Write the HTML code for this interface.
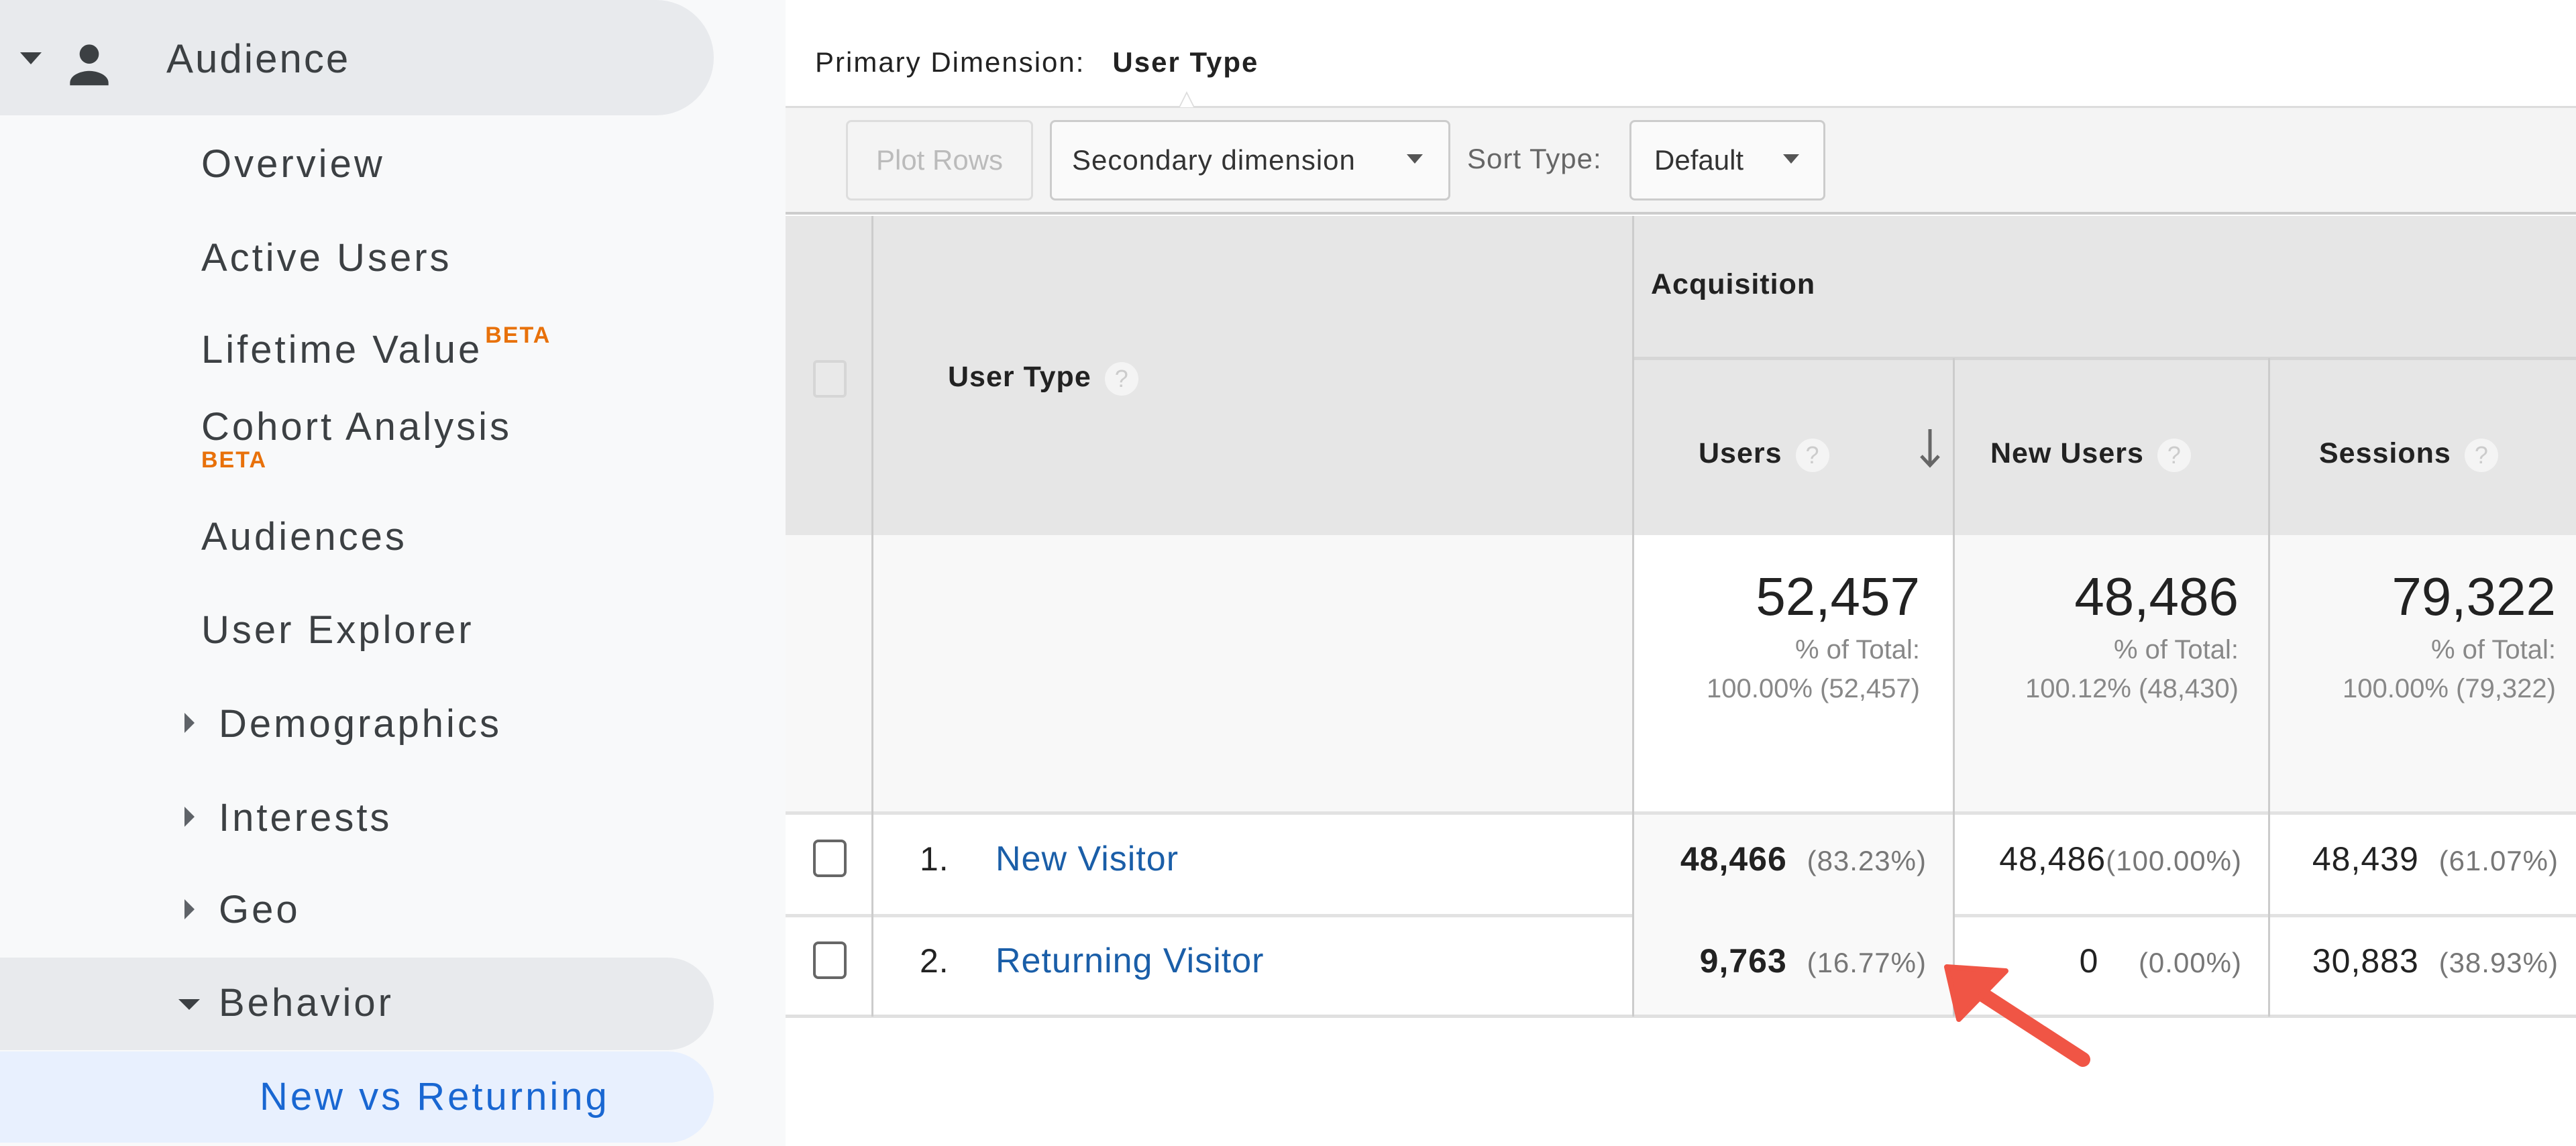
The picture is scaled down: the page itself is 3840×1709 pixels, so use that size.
<!DOCTYPE html>
<html><head><meta charset="utf-8"><style>
*{margin:0;padding:0;box-sizing:border-box}
body{width:3840px;height:1709px;position:relative;overflow:hidden;background:#fff;font-family:"Liberation Sans",sans-serif}
.a{position:absolute;white-space:nowrap}
.s{font-size:58px;color:#3c4043;line-height:80px;height:80px;letter-spacing:4px}
.tri{position:absolute;width:0;height:0}
.q{display:inline-block;width:50px;height:50px;border-radius:50%;background:#f4f4f4;color:#ccc;font-size:36px;line-height:50px;text-align:center;font-weight:normal;vertical-align:middle;margin-left:20px;letter-spacing:0}
.h{font-size:43px;font-weight:bold;color:#222;line-height:60px;letter-spacing:1px}
.vl{position:absolute;width:3px;background:#ccc}
.n{font-size:50px;color:#222;line-height:60px;text-align:right;letter-spacing:1px}
.p{color:#777;font-size:42px;font-weight:normal}
.cb{position:absolute;width:50px;height:56px;border:4px solid #666;border-radius:8px;background:#fff}
</style></head><body>
<div class="a" style="left:0;top:0;width:1171px;height:1709px;background:#f8f9fa"></div>
<div class="a" style="left:0;top:0;width:1064px;height:172px;background:#e8eaed;border-radius:0 86px 86px 0"></div>
<div class="a" style="left:0;top:1428px;width:1064px;height:138px;background:#e8eaed;border-radius:0 69px 69px 0"></div>
<div class="a" style="left:0;top:1568px;width:1064px;height:136px;background:#e8f0fe;border-radius:0 68px 68px 0"></div>
<div class="tri" style="left:30px;top:78px;border-left:16px solid transparent;border-right:16px solid transparent;border-top:18px solid #3c4043"></div>
<svg class="a" style="left:90px;top:52px" width="86" height="86" viewBox="0 0 24 24"><circle cx="12" cy="8" r="4" fill="#3c4043"/><path d="M4 20c0-3.5 5-5 8-5s8 1.5 8 5v1H4z" fill="#3c4043"/></svg>
<div class="a s" style="left:248px;top:48px;font-size:60px;letter-spacing:3px">Audience</div>
<div class="a s" style="left:300px;top:205px">Overview</div>
<div class="a s" style="left:300px;top:345px">Active Users</div>
<div class="a s" style="left:300px;top:482px">Lifetime Value<span style="position:relative;top:-30px;font-size:34px;color:#e8710a;font-weight:bold;margin-left:4px;letter-spacing:2px">BETA</span></div>
<div class="a s" style="left:300px;top:597px">Cohort Analysis</div>
<div class="a" style="left:300px;top:667px;font-size:34px;color:#e8710a;font-weight:bold;letter-spacing:2px">BETA</div>
<div class="a s" style="left:300px;top:761px">Audiences</div>
<div class="a s" style="left:300px;top:900px">User Explorer</div>
<div class="tri" style="left:275px;top:1063px;border-top:15px solid transparent;border-bottom:15px solid transparent;border-left:15px solid #5f6368"></div>
<div class="a s" style="left:326px;top:1040px">Demographics</div>
<div class="tri" style="left:275px;top:1203px;border-top:15px solid transparent;border-bottom:15px solid transparent;border-left:15px solid #5f6368"></div>
<div class="a s" style="left:326px;top:1180px">Interests</div>
<div class="tri" style="left:275px;top:1341px;border-top:15px solid transparent;border-bottom:15px solid transparent;border-left:15px solid #5f6368"></div>
<div class="a s" style="left:326px;top:1317px">Geo</div>
<div class="tri" style="left:266px;top:1490px;border-left:16px solid transparent;border-right:16px solid transparent;border-top:16px solid #3c4043"></div>
<div class="a s" style="left:326px;top:1456px">Behavior</div>
<div class="a s" style="left:387px;top:1596px;color:#1967d2">New vs Returning</div>
<div class="a" style="left:1215px;top:68px;font-size:42px;color:#222;line-height:50px;letter-spacing:2px">Primary Dimension:&nbsp;&nbsp; <b>User Type</b></div>
<div class="a" style="left:1171px;top:158px;width:2669px;height:162px;background:#f4f4f4;border-top:3px solid #ddd;border-bottom:4px solid #ccc"></div>
<div class="a" style="left:1757px;top:136px;width:0;height:0;border-left:12px solid transparent;border-right:12px solid transparent;border-bottom:24px solid #ddd"></div>
<div class="a" style="left:1759px;top:140px;width:0;height:0;border-left:10px solid transparent;border-right:10px solid transparent;border-bottom:20px solid #fff"></div>
<div class="a" style="left:1261px;top:179px;width:279px;height:120px;border:3px solid #ddd;border-radius:8px;background:#f4f4f4;color:#bbb;font-size:42px;line-height:114px;text-align:center">Plot Rows</div>
<div class="a" style="left:1565px;top:179px;width:597px;height:120px;border:3px solid #ccc;border-radius:8px;background:#fafafa;color:#333;font-size:42px;line-height:114px;padding-left:30px;letter-spacing:1px">Secondary dimension</div>
<div class="tri" style="left:2097px;top:230px;border-left:12px solid transparent;border-right:12px solid transparent;border-top:14px solid #555"></div>
<div class="a" style="left:2187px;top:210px;font-size:42px;color:#666;line-height:54px;letter-spacing:1px">Sort Type:</div>
<div class="a" style="left:2429px;top:179px;width:292px;height:120px;border:3px solid #ccc;border-radius:8px;background:#fafafa;color:#333;font-size:42px;line-height:114px;padding-left:34px">Default</div>
<div class="tri" style="left:2658px;top:230px;border-left:12px solid transparent;border-right:12px solid transparent;border-top:14px solid #555"></div>
<div class="a" style="left:1171px;top:322px;width:2669px;height:476px;background:#e6e6e6"></div>
<div class="a" style="left:2434px;top:532px;width:1406px;height:5px;background:#d6d6d6"></div>
<div class="a" style="left:1212px;top:537px;width:50px;height:56px;border:4px solid #d6d6d6;border-radius:6px;background:#e9e9e9"></div>
<div class="a h" style="left:1413px;top:532px">User Type<span class="q">?</span></div>
<div class="a h" style="left:2461px;top:394px">Acquisition</div>
<div class="a h" style="left:2532px;top:646px">Users<span class="q">?</span></div>
<svg class="a" style="left:2860px;top:638px" width="34" height="62" viewBox="0 0 34 62"><path d="M17 2v54M4 42l13 14 13-14" stroke="#666" stroke-width="5" fill="none"/></svg>
<div class="a h" style="left:2967px;top:646px">New Users<span class="q">?</span></div>
<div class="a h" style="left:3457px;top:646px">Sessions<span class="q">?</span></div>
<div class="a" style="left:1171px;top:798px;width:2669px;height:414px;background:#f8f8f8"></div>
<div class="a" style="left:2434px;top:798px;width:478px;height:414px;background:#fff"></div>
<div class="a" style="left:1171px;top:1210px;width:2669px;height:5px;background:#e2e2e2"></div>
<div class="a" style="left:1171px;top:1363px;width:2669px;height:5px;background:#e2e2e2"></div>
<div class="a" style="left:1171px;top:1513px;width:2669px;height:5px;background:#e0e0e0"></div>
<div class="a" style="left:2434px;top:1215px;width:478px;height:298px;background:#f9f9f9"></div>
<div class="vl" style="left:1299px;top:322px;height:1194px"></div>
<div class="vl" style="left:2433px;top:322px;height:1194px"></div>
<div class="vl" style="left:2911px;top:534px;height:982px"></div>
<div class="vl" style="left:3381px;top:534px;height:982px"></div>
<div class="a" style="left:2434px;top:840px;width:428px;text-align:right;font-size:80px;color:#222;line-height:100px">52,457</div>
<div class="a" style="left:2912px;top:840px;width:425px;text-align:right;font-size:80px;color:#222;line-height:100px">48,486</div>
<div class="a" style="left:3382px;top:840px;width:428px;text-align:right;font-size:80px;color:#222;line-height:100px">79,322</div>
<div class="a" style="left:2434px;top:940px;width:428px;text-align:right;font-size:40px;color:#888;line-height:58px">% of Total:<br>100.00% (52,457)</div>
<div class="a" style="left:2912px;top:940px;width:425px;text-align:right;font-size:40px;color:#888;line-height:58px">% of Total:<br>100.12% (48,430)</div>
<div class="a" style="left:3382px;top:940px;width:428px;text-align:right;font-size:40px;color:#888;line-height:58px">% of Total:<br>100.00% (79,322)</div>
<div class="cb" style="left:1212px;top:1252px"></div>
<div class="cb" style="left:1212px;top:1404px"></div>
<div class="a n" style="left:1371px;top:1251px">1.</div>
<div class="a n" style="left:1371px;top:1403px">2.</div>
<div class="a n" style="left:1484px;top:1251px;color:#1a5ea8;font-size:52px">New Visitor</div>
<div class="a n" style="left:1484px;top:1403px;color:#1a5ea8;font-size:52px">Returning Visitor</div>
<div class="a n" style="left:2434px;top:1251px;width:438px"><b>48,466</b>&nbsp; <span class="p">(83.23%)</span></div>
<div class="a n" style="left:2434px;top:1403px;width:438px"><b>9,763</b>&nbsp; <span class="p">(16.77%)</span></div>
<div class="a n" style="left:2912px;top:1251px;width:430px">48,486<span class="p">(100.00%)</span></div>
<div class="a n" style="left:2912px;top:1403px;width:430px">0 &nbsp;&nbsp; <span class="p">(0.00%)</span></div>
<div class="a n" style="left:3382px;top:1251px;width:432px">48,439 &nbsp;<span class="p">(61.07%)</span></div>
<div class="a n" style="left:3382px;top:1403px;width:432px">30,883 &nbsp;<span class="p">(38.93%)</span></div>
<svg class="a" style="left:2880px;top:1420px" width="260" height="190" viewBox="0 0 260 190"><path d="M225 160L40 40" stroke="#f05545" stroke-width="22" stroke-linecap="round"/><path d="M22 22L110 28L40 100z" fill="#f05545" stroke="#f05545" stroke-width="8" stroke-linejoin="round"/></svg>
</body></html>
